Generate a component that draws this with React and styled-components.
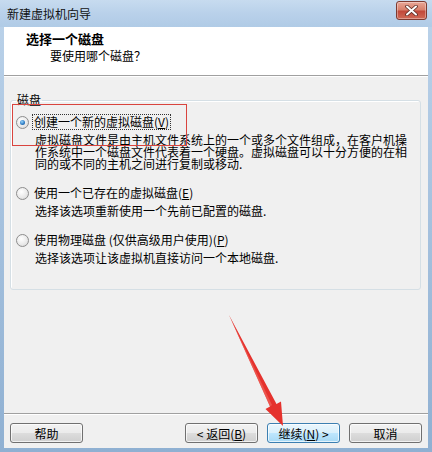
import React from "react";
import styled, { createGlobalStyle } from "styled-components";

const GlobalStyle = createGlobalStyle`
    html, body {
        margin: 0;
        padding: 0;
        background: #ffffff;
    }
    body {
        font-family: "Noto Sans CJK SC", "Liberation Sans", sans-serif;
        font-size: 12px;
        color: #000;
    }
`;

const options = [
    {
        id: "new",
        label: "创建一个新的虚拟磁盘",
        key: "V",
        checked: true,
        lines: [
            "虚拟磁盘文件是由主机文件系统上的一个或多个文件组成，在客户机操",
            "作系统中一个磁盘文件代表着一个硬盘。虚拟磁盘可以十分方便的在相",
            "同的或不同的主机之间进行复制或移动.",
        ],
    },
    {
        id: "existing",
        label: "使用一个已存在的虚拟磁盘",
        key: "E",
        lines: ["选择该选项重新使用一个先前已配置的磁盘."],
    },
    {
        id: "physical",
        label: "使用物理磁盘 (仅供高级用户使用)",
        key: "P",
        lines: ["选择该选项让该虚拟机直接访问一个本地磁盘."],
    },
];

function CloseGlyph() {
    return (
        <svg width="13" height="11" viewBox="0 0 13 11">
            <path d="M2 1.5 L11 9.5 M11 1.5 L2 9.5" stroke="#5a2a22" strokeWidth="3.6" strokeLinecap="round" />
            <path d="M2 1.5 L11 9.5 M11 1.5 L2 9.5" stroke="#ffffff" strokeWidth="2" strokeLinecap="round" />
        </svg>
    );
}

function Arrow() {
    return (
        <ArrowLayer viewBox="0 0 432 452" width="432" height="452">
            <polygon
                points="229,315 276.5,404 281,401.5 283,426 265.5,409 270,406.5"
                fill="#e5322d"
            />
            <polygon points="229,315 272,405 270,406.5" fill="#f06a62" opacity="0.6" />
        </ArrowLayer>
    );
}

function App() {
    return (
        <>
            <GlobalStyle />
            <Window>
                <TitleBar>
                    <span>新建虚拟机向导</span>
                    <CloseButton>
                        <CloseGlyph />
                    </CloseButton>
                </TitleBar>
                <Client>
                    <Header>
                        <HeaderTitle>选择一个磁盘</HeaderTitle>
                        <HeaderSub>要使用哪个磁盘？</HeaderSub>
                    </Header>
                    <Body>
                        <Group>
                            <Legend>磁盘</Legend>
                            {options.map((o) => (
                                <Option key={o.id}>
                                    <OptionRow>
                                        <Radio $checked={o.checked} />
                                        <OptionLabel $focused={o.checked}>
                                            {o.label}(<u>{o.key}</u>)
                                        </OptionLabel>
                                    </OptionRow>
                                    <Desc>
                                        {o.lines.map((l) => (
                                            <DescLine key={l}>{l}</DescLine>
                                        ))}
                                    </Desc>
                                </Option>
                            ))}
                        </Group>
                    </Body>
                    <Footer>
                        <Button>帮助</Button>
                        <Spacer />
                        <Button>&lt; 返回(<u>B</u>)</Button>
                        <Button $active>继续(<u>N</u>) &gt;</Button>
                        <Button>取消</Button>
                    </Footer>
                </Client>
                <Highlight />
                <Arrow />
            </Window>
        </>
    );
}

const Window = styled.div`
    position: relative;
    width: 432px;
    height: 452px;
    display: flex;
    flex-direction: column;
    background: linear-gradient(to bottom, #bcd3ea 0%, #a9c4e0 40%, #8fb0d2 100%);
    overflow: hidden;
`;

const TitleBar = styled.div`
    height: 27px;
    flex: none;
    display: flex;
    align-items: center;
    justify-content: space-between;
    padding: 0 5px 0 7px;
    background: linear-gradient(to bottom, #c7dbef 0%, #b9d1ea 50%, #b0cbe6 100%);
    font-size: 12px;
    color: #111;

    span {
        line-height: 16px;
    }
`;

const CloseButton = styled.div`
    width: 29px;
    height: 17px;
    margin-top: -6px;
    display: flex;
    align-items: center;
    justify-content: center;
    border: 1px solid #7e3a30;
    border-radius: 3px;
    background: linear-gradient(to bottom, #e9a797 0%, #d8806c 45%, #c2493a 55%, #d06a56 100%);
    box-shadow: inset 0 0 0 1px rgba(255, 255, 255, 0.35);
`;

const Client = styled.div`
    flex: 1;
    display: flex;
    flex-direction: column;
    margin: 0 4px 4px;
    background: #f0f0f0;
`;

const Header = styled.div`
    height: 49px;
    flex: none;
    background: #ffffff;
    padding: 4px 0 0 22px;
    box-sizing: border-box;
    border-bottom: 1px solid #a0a0a0;
    box-shadow: 0 1px 0 #ffffff;
`;

const HeaderTitle = styled.div`
    font-size: 13px;
    font-weight: 700;
    line-height: 16px;
`;

const HeaderSub = styled.div`
    font-size: 12px;
    line-height: 16px;
    margin-top: 1px;
    padding-left: 24px;
`;

const Body = styled.div`
    flex: 1;
    padding: 17px 7px 0 6px;
`;

const Group = styled.fieldset`
    margin: 0;
    padding: 7px 5px 25px 5px;
    border: 1px solid #d5dfe5;
    border-radius: 3px;
    box-shadow: inset 1px 1px 0 #ffffff;
    display: flex;
    flex-direction: column;
    gap: 15px;
`;

const Legend = styled.legend`
    padding: 0 1px;
    font-size: 12px;
    line-height: 14px;
`;

const Option = styled.div`
    display: flex;
    flex-direction: column;
`;

const OptionRow = styled.div`
    display: flex;
    align-items: center;
    height: 16px;
`;

const Radio = styled.span`
    width: 11px;
    height: 11px;
    border-radius: 50%;
    border: 1px solid #8d8d8d;
    background: radial-gradient(circle at 40% 35%, #ffffff 0%, #e8e8e8 60%, #cfcfcf 100%);
    display: flex;
    align-items: center;
    justify-content: center;
    flex: none;

    &::after {
        content: "";
        width: 5px;
        height: 5px;
        border-radius: 50%;
        display: ${(p) => (p.$checked ? "block" : "none")};
        background: radial-gradient(circle at 40% 35%, #9ad4f8 0%, #2f7fc8 55%, #17497f 100%);
    }
`;

const OptionLabel = styled.span`
    margin-left: 3px;
    padding: 0 1px;
    line-height: 14px;
    border: 1px dotted ${(p) => (p.$focused ? "#333" : "transparent")};

    u {
        text-decoration: underline;
    }
`;

const Desc = styled.div`
    margin-top: 4px;
    padding-left: 19px;
`;

const DescLine = styled.div`
    line-height: 12px;
    white-space: nowrap;
`;

const Footer = styled.div`
    height: 35px;
    flex: none;
    box-sizing: border-box;
    border-top: 1px solid #a0a0a0;
    box-shadow: inset 0 1px 0 #ffffff;
    display: flex;
    align-items: flex-start;
    gap: 9px;
    padding: 9px 6px 0 6px;
`;

const Spacer = styled.div`
    flex: 1;
`;

const Button = styled.div`
    width: 73px;
    height: 20px;
    box-sizing: border-box;
    display: flex;
    align-items: center;
    justify-content: center;
    font-size: 12px;
    border-radius: 3px;
    border: 1px solid ${(p) => (p.$active ? "#3c7fb1" : "#707070")};
    background: ${(p) =>
        p.$active
            ? "linear-gradient(to bottom, #eaf6fd 0%, #d9f0fc 50%, #bee6fd 51%, #a7d9f5 100%)"
            : "linear-gradient(to bottom, #f2f2f2 0%, #ebebeb 50%, #dddddd 51%, #cfcfcf 100%)"};
    box-shadow: inset 0 0 0 1px rgba(255, 255, 255, 0.7);
    flex: none;
`;

const Highlight = styled.div`
    position: absolute;
    left: 12px;
    top: 104px;
    width: 175px;
    height: 42px;
    border: 1px solid #d9443e;
    box-sizing: border-box;
    pointer-events: none;
`;

const ArrowLayer = styled.svg`
    position: absolute;
    left: 0;
    top: 0;
    pointer-events: none;
`;

export default App;
